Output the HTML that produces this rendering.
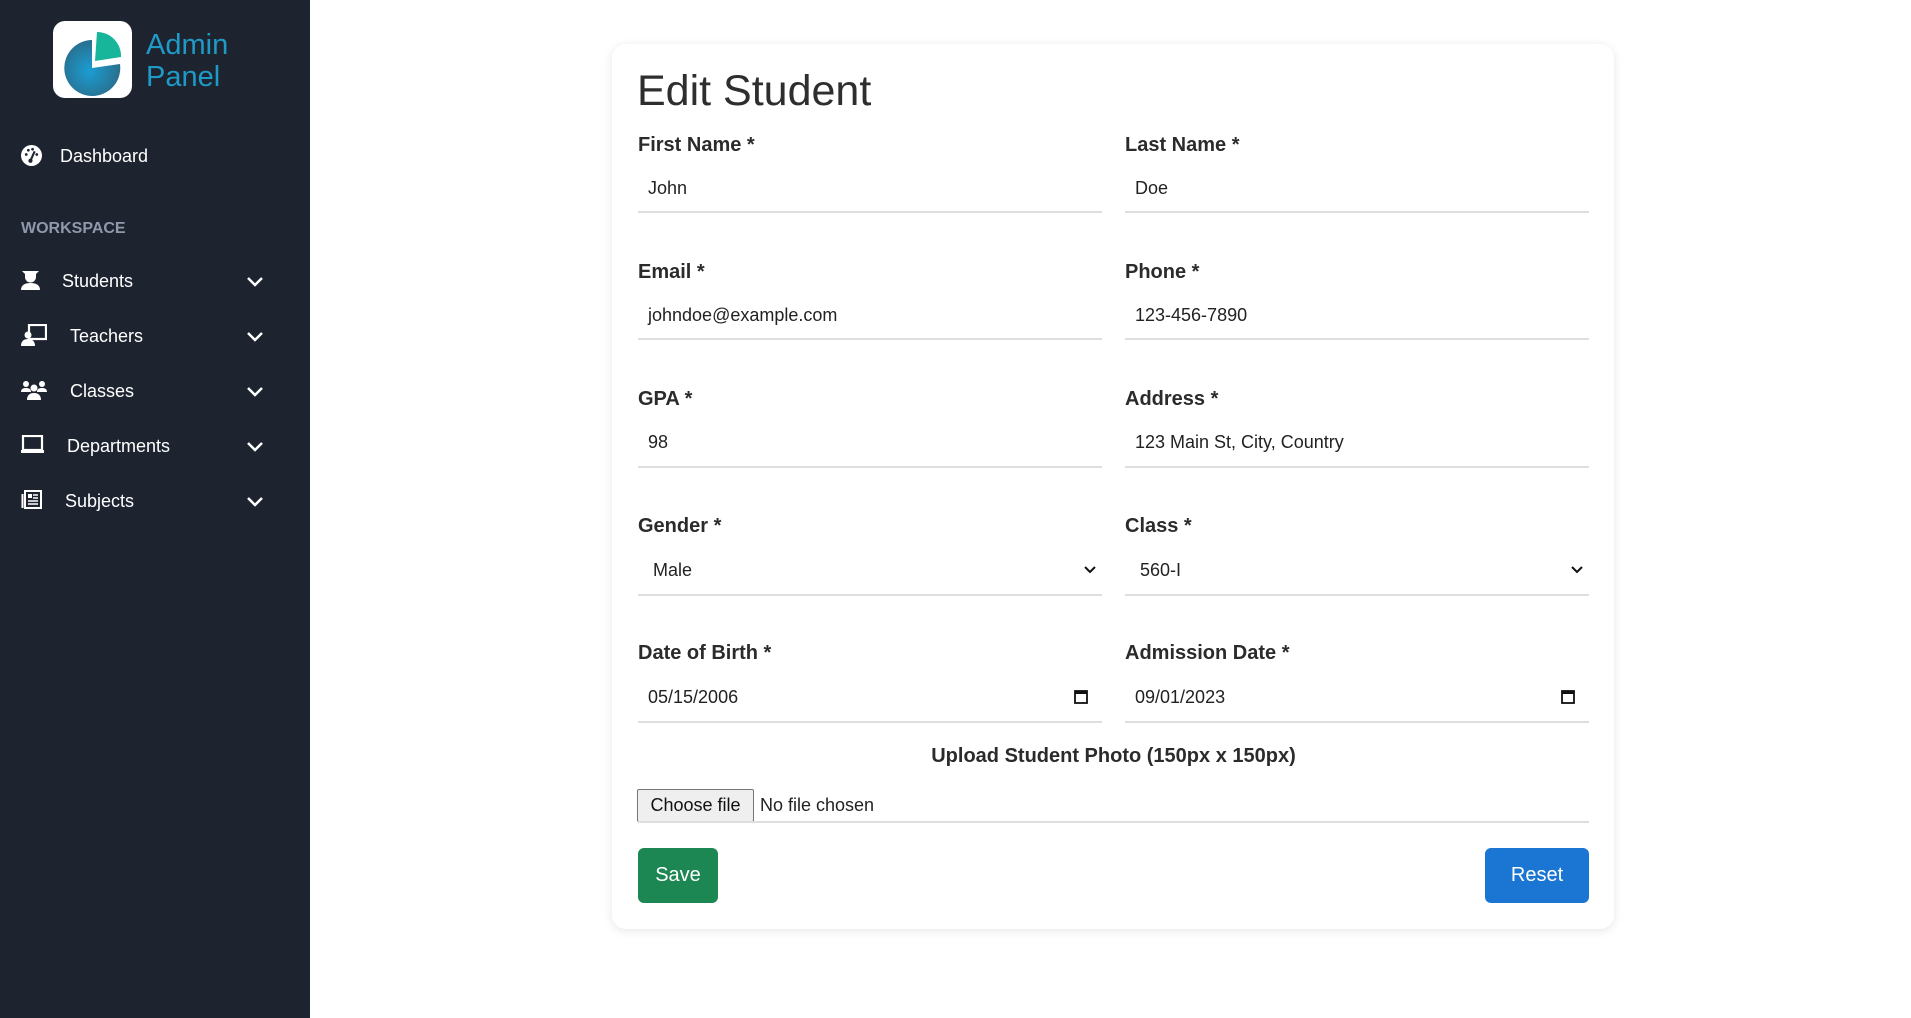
<!DOCTYPE html>
<html><head><meta charset="utf-8"><style>
*{margin:0;padding:0;box-sizing:border-box}
body{width:1911px;height:1018px;background:#fff;font-family:"Liberation Sans",sans-serif;position:relative;overflow:hidden}
.sb{position:absolute;left:0;top:0;width:310px;height:1018px;background:#1e2330}
.abs{position:absolute}
.nav{position:absolute;color:#fff;font-size:18px;line-height:20px}
.chev{position:absolute;left:246px;width:18px;height:18px}
.card{position:absolute;left:612px;top:44px;width:1002px;height:885px;background:#fff;border-radius:14px;box-shadow:0 2px 10px rgba(0,0,0,.10)}
.lbl{position:absolute;font-weight:bold;font-size:20px;color:#2b2b2b;line-height:24px}
.val{position:absolute;font-size:18px;color:#222;line-height:22px}
.ul{position:absolute;height:2px;background:#dedede}
</style></head><body>
<div class="sb">
  <div class="abs" style="left:53px;top:21px;width:79px;height:77px;background:#fff;border-radius:12px">
    <svg width="79" height="77" viewBox="0 0 79 77"><defs><radialGradient id="g" cx="0.45" cy="0.55" r="0.6"><stop offset="0" stop-color="#1b9ed3"/><stop offset="1" stop-color="#2a6a86"/></radialGradient></defs>
    <path d="M39 19 A28 28 0 1 0 67 43 L39 47 Z" fill="url(#g)"/>
    <path d="M44 11 A24 24 0 0 1 68 36 L42 40 Z" fill="#17b59a"/></svg>
  </div>
  <div class="abs" style="left:146px;top:29px;color:#1e9ac6;font-size:29px;line-height:32px">Admin<br>Panel</div>

  <svg class="abs" style="left:21px;top:145px" width="21" height="21" viewBox="0 0 20 20"><circle cx="10" cy="10" r="10" fill="#fff"/><circle cx="5" cy="9" r="1.3" fill="#1e2330"/><circle cx="7" cy="5" r="1.3" fill="#1e2330"/><circle cx="11" cy="4" r="1.3" fill="#1e2330"/><circle cx="15" cy="9" r="1.3" fill="#1e2330"/><path d="M9 15 L13 6" stroke="#1e2330" stroke-width="2"/><circle cx="9" cy="15" r="2" fill="#1e2330"/></svg>
  <div class="nav" style="left:60px;top:146px">Dashboard</div>
  <div class="abs" style="left:21px;top:220px;color:#8f99ab;font-size:16px;font-weight:bold">WORKSPACE</div>

  <svg class="abs" style="left:21px;top:270px" width="19" height="20" viewBox="0 0 19 20"><path d="M1 1h17l-3 3v3a5.5 5.5 0 0 1-11 0V4z" fill="#fff"/><path d="M0 20c0-5 4-7 9.5-7S19 15 19 20z" fill="#fff"/></svg>
  <div class="nav" style="left:62px;top:271px">Students</div>
  <svg class="abs" style="left:21px;top:324px" width="26" height="22" viewBox="0 0 26 22"><rect x="8" y="1" width="17" height="14" fill="none" stroke="#fff" stroke-width="2.2"/><circle cx="7" cy="11" r="3.5" fill="#fff"/><path d="M0 22c0-5 3-7 7-7s7 2 7 7z" fill="#fff"/></svg>
  <div class="nav" style="left:70px;top:326px">Teachers</div>
  <svg class="abs" style="left:21px;top:380px" width="26" height="20" viewBox="0 0 26 20"><circle cx="5" cy="4" r="3" fill="#fff"/><circle cx="21" cy="4" r="3" fill="#fff"/><circle cx="13" cy="8" r="3.5" fill="#fff"/><path d="M0 12c0-3 2-4 5-4s5 1 5 4zM16 12c0-3 2-4 5-4s5 1 5 4zM6 20c0-5 3-7 7-7s7 2 7 7z" fill="#fff"/></svg>
  <div class="nav" style="left:70px;top:381px">Classes</div>
  <svg class="abs" style="left:21px;top:435px" width="23" height="19" viewBox="0 0 23 19"><rect x="2" y="1" width="19" height="14" fill="none" stroke="#fff" stroke-width="2.2"/><rect x="0" y="15" width="23" height="3" fill="#fff"/></svg>
  <div class="nav" style="left:67px;top:436px">Departments</div>
  <svg class="abs" style="left:21px;top:490px" width="21" height="19" viewBox="0 0 21 19"><rect x="4" y="1" width="16" height="17" fill="none" stroke="#fff" stroke-width="2"/><rect x="0.5" y="4" width="2" height="14" fill="#fff"/><rect x="7" y="4" width="4" height="4" fill="#fff"/><path d="M12 5h5M12 8h5M7 11h10M7 14h10" stroke="#fff" stroke-width="1.5"/></svg>
  <div class="nav" style="left:65px;top:491px">Subjects</div>

  <svg class="chev" style="top:272px" viewBox="0 0 18 18"><path d="M2 6l7 7 7-7" fill="none" stroke="#fff" stroke-width="2.5"/></svg>
  <svg class="chev" style="top:327px" viewBox="0 0 18 18"><path d="M2 6l7 7 7-7" fill="none" stroke="#fff" stroke-width="2.5"/></svg>
  <svg class="chev" style="top:382px" viewBox="0 0 18 18"><path d="M2 6l7 7 7-7" fill="none" stroke="#fff" stroke-width="2.5"/></svg>
  <svg class="chev" style="top:437px" viewBox="0 0 18 18"><path d="M2 6l7 7 7-7" fill="none" stroke="#fff" stroke-width="2.5"/></svg>
  <svg class="chev" style="top:492px" viewBox="0 0 18 18"><path d="M2 6l7 7 7-7" fill="none" stroke="#fff" stroke-width="2.5"/></svg>
</div>

<div class="card"></div>
<div class="abs" style="left:637px;top:66px;font-size:43px;color:#2e2e2e;line-height:50px">Edit Student</div>

<div class="lbl" style="left:638px;top:133px">First Name *</div>
<div class="lbl" style="left:1125px;top:133px">Last Name *</div>
<div class="val" style="left:648px;top:177px">John</div>
<div class="val" style="left:1135px;top:177px">Doe</div>
<div class="ul" style="left:638px;top:211px;width:464px"></div>
<div class="ul" style="left:1125px;top:211px;width:464px"></div>

<div class="lbl" style="left:638px;top:260px">Email *</div>
<div class="lbl" style="left:1125px;top:260px">Phone *</div>
<div class="val" style="left:648px;top:304px">johndoe@example.com</div>
<div class="val" style="left:1135px;top:304px">123-456-7890</div>
<div class="ul" style="left:638px;top:338px;width:464px"></div>
<div class="ul" style="left:1125px;top:338px;width:464px"></div>

<div class="lbl" style="left:638px;top:387px">GPA *</div>
<div class="lbl" style="left:1125px;top:387px">Address *</div>
<div class="val" style="left:648px;top:431px">98</div>
<div class="val" style="left:1135px;top:431px">123 Main St, City, Country</div>
<div class="ul" style="left:638px;top:466px;width:464px"></div>
<div class="ul" style="left:1125px;top:466px;width:464px"></div>

<div class="lbl" style="left:638px;top:514px">Gender *</div>
<div class="lbl" style="left:1125px;top:514px">Class *</div>
<div class="val" style="left:653px;top:559px">Male</div>
<div class="val" style="left:1140px;top:559px">560-I</div>
<svg class="abs" style="left:1084px;top:565px" width="12" height="10" viewBox="0 0 12 10"><path d="M1 2l5 5 5-5" fill="none" stroke="#111" stroke-width="2"/></svg>
<svg class="abs" style="left:1571px;top:565px" width="12" height="10" viewBox="0 0 12 10"><path d="M1 2l5 5 5-5" fill="none" stroke="#111" stroke-width="2"/></svg>
<div class="ul" style="left:638px;top:594px;width:464px"></div>
<div class="ul" style="left:1125px;top:594px;width:464px"></div>

<div class="lbl" style="left:638px;top:641px">Date of Birth *</div>
<div class="lbl" style="left:1125px;top:641px">Admission Date *</div>
<div class="val" style="left:648px;top:686px">05/15/2006</div>
<div class="val" style="left:1135px;top:686px">09/01/2023</div>
<svg class="abs" style="left:1074px;top:689px" width="14" height="15" viewBox="0 0 14 15"><rect x="1" y="2" width="12" height="12" fill="none" stroke="#111" stroke-width="1.8"/><rect x="1" y="2" width="12" height="3" fill="#111"/></svg>
<svg class="abs" style="left:1561px;top:689px" width="14" height="15" viewBox="0 0 14 15"><rect x="1" y="2" width="12" height="12" fill="none" stroke="#111" stroke-width="1.8"/><rect x="1" y="2" width="12" height="3" fill="#111"/></svg>
<div class="ul" style="left:638px;top:721px;width:464px"></div>
<div class="ul" style="left:1125px;top:721px;width:464px"></div>

<div class="lbl" style="left:638px;top:744px;width:951px;text-align:center">Upload Student Photo (150px x 150px)</div>
<div class="abs" style="left:637px;top:789px;width:117px;height:33px;background:#efefef;border:1px solid #767676;border-radius:2px;font-size:18px;line-height:31px;text-align:center;color:#111">Choose file</div>
<div class="val" style="left:760px;top:794px">No file chosen</div>
<div class="ul" style="left:638px;top:821px;width:951px"></div>

<div class="abs" style="left:638px;top:848px;width:80px;height:55px;background:#1c8753;border-radius:6px;color:#fff;font-size:20px;line-height:55px;text-align:center">Save</div>
<div class="abs" style="left:1485px;top:848px;width:104px;height:55px;background:#1b76d3;border-radius:6px;color:#fff;font-size:20px;line-height:55px;text-align:center">Reset</div>
</body></html>
